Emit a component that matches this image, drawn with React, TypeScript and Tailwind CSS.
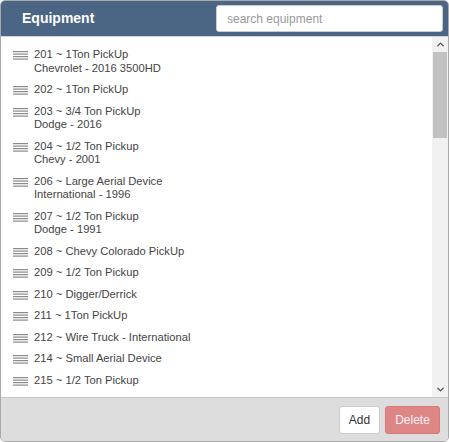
import { ChevronUp, ChevronDown } from 'lucide-react';

type Item = { id: string; title: string; sub?: string };

const items: Item[] = [
  { id: '201', title: '1Ton PickUp', sub: 'Chevrolet - 2016 3500HD' },
  { id: '202', title: '1Ton PickUp' },
  { id: '203', title: '3/4 Ton PickUp', sub: 'Dodge - 2016' },
  { id: '204', title: '1/2 Ton Pickup', sub: 'Chevy - 2001' },
  { id: '206', title: 'Large Aerial Device', sub: 'International - 1996' },
  { id: '207', title: '1/2 Ton Pickup', sub: 'Dodge - 1991' },
  { id: '208', title: 'Chevy Colorado PickUp' },
  { id: '209', title: '1/2 Ton Pickup' },
  { id: '210', title: 'Digger/Derrick' },
  { id: '211', title: '1Ton PickUp' },
  { id: '212', title: 'Wire Truck - International' },
  { id: '214', title: 'Small Aerial Device' },
  { id: '215', title: '1/2 Ton Pickup' },
  { id: '216', title: 'Wire Truck' },
];

function Handle() {
  return (
    <svg width="15" height="9" viewBox="0 0 15 9" className="mt-[3px] shrink-0">
      <rect x="0" y="0" width="15" height="1.2" fill="#8a8a8a" />
      <rect x="0" y="2.5" width="15" height="1.2" fill="#8a8a8a" />
      <rect x="0" y="5" width="15" height="1.2" fill="#8a8a8a" />
      <rect x="0" y="7.5" width="15" height="1.2" fill="#8a8a8a" />
    </svg>
  );
}

export default function App() {
  return (
    <div className="h-[442px] w-[449px] bg-white font-['Liberation_Sans',Arial,sans-serif]">
      <div className="flex h-full flex-col overflow-hidden rounded-[5px] border border-[#a9a9a9]">
        <div className="flex h-[35px] shrink-0 items-center justify-between bg-[#4b6584] pl-[21px] pr-[5px]">
          <h1 className="text-[14px] font-bold text-white">Equipment</h1>
          <input
            placeholder="search equipment"
            className="h-[27px] w-[227px] rounded-[3px] border border-[#ccc] bg-white px-[10px] text-[12px] text-[#555] placeholder:text-[#999] outline-none"
          />
        </div>

        <div className="flex min-h-0 flex-1 border-t border-[#cfd6de]">
          <ul className="min-w-0 flex-1 overflow-hidden pt-[7px]">
            {items.map((it) => (
              <li key={it.id} className="flex gap-[6px] py-[4px] pl-[12px] text-[11.2px] leading-[13.5px] text-[#444]">
                <Handle />
                <div>
                  <div>
                    {it.id} ~ {it.title}
                  </div>
                  {it.sub && <div>{it.sub}</div>}
                </div>
              </li>
            ))}
          </ul>
          <div className="flex w-[16px] shrink-0 flex-col bg-[#f1f1f1]">
            <div className="flex h-[15px] items-center justify-center">
              <ChevronUp size={11} strokeWidth={3} className="text-[#505050]" />
            </div>
            <div className="mx-[1px] h-[86px] bg-[#c1c1c1]" />
            <div className="flex-1" />
            <div className="flex h-[15px] items-center justify-center">
              <ChevronDown size={11} strokeWidth={3} className="text-[#505050]" />
            </div>
          </div>
        </div>

        <div className="flex h-[44px] shrink-0 items-center justify-end gap-[5px] border-t border-[#c8c8c8] bg-[#dddddd] pr-[8px]">
          <button className="h-[28px] w-[41px] rounded-[3px] border border-[#ccc] bg-white text-[12px] text-[#333]">
            Add
          </button>
          <button className="h-[28px] w-[55px] rounded-[3px] border border-[#d9777a] bg-[#de8585] text-[12px] text-white/90">
            Delete
          </button>
        </div>
      </div>
    </div>
  );
}
